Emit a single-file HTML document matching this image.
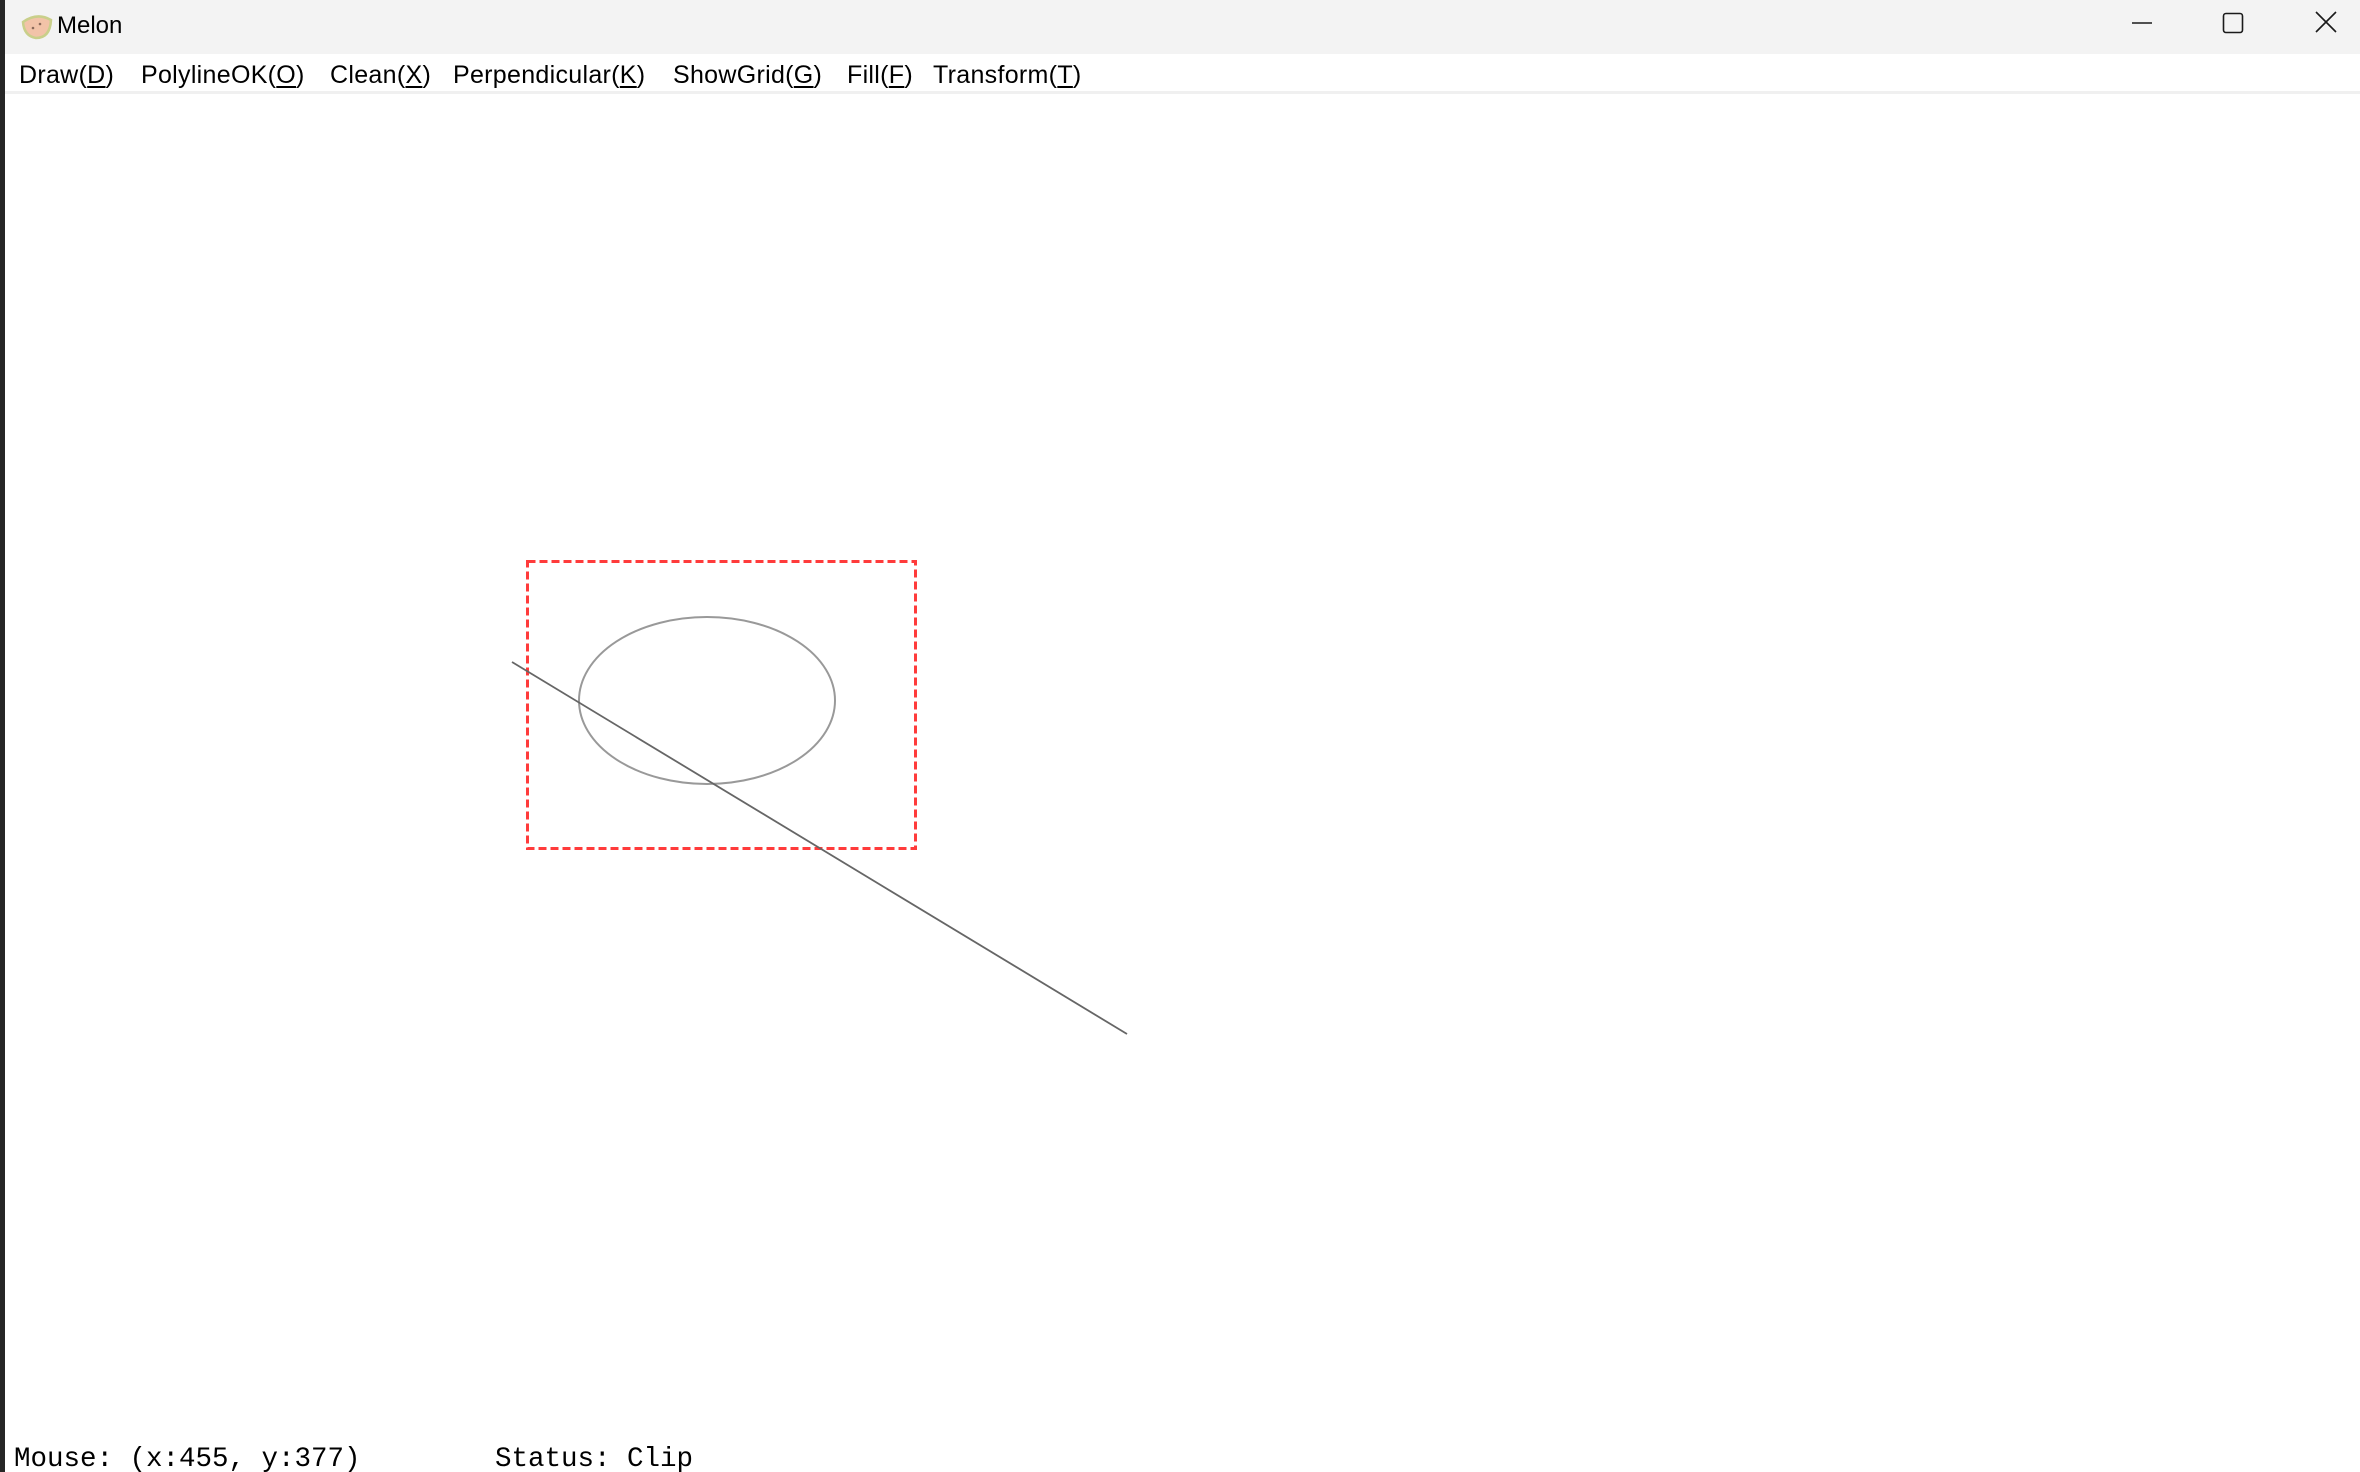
<!DOCTYPE html>
<html><head><meta charset="utf-8"><style>
html,body{margin:0;padding:0;width:2360px;height:1472px;overflow:hidden;background:#fff;position:relative;font-family:"Liberation Sans","Noto Sans CJK SC",sans-serif}
.lb{position:absolute;left:0;top:0;width:5px;height:1472px;background:#262626}
.tb{position:absolute;left:5px;top:0;right:0;height:54px;background:#f3f3f3}
.title{position:absolute;left:57px;top:12px;font-size:24px;color:#000}
.mb{position:absolute;left:5px;top:54px;right:0;height:37px;background:#fff}
.ml{position:absolute;left:5px;top:91px;right:0;height:3px;background:#f0f0f0}
.mi{position:absolute;top:61px;font-size:25px;color:#000;white-space:nowrap;letter-spacing:0.3px}
.mi u{text-underline-offset:3px}
.st{position:absolute;top:1444px;font-family:"Liberation Mono",monospace;font-size:27.5px;color:#000;white-space:pre}
</style></head><body>
<div class="lb"></div>
<div class="tb"></div>
<svg style="position:absolute;left:20px;top:8px" width="34" height="33" viewBox="0 0 34 33">
<path d="M3 14 Q17 4 31 12 Q30 30 16 30 Q4 28 3 14Z" fill="#f2c3a8" stroke="#c9cf8a" stroke-width="2.5"/>
<circle cx="13" cy="20" r="1.3" fill="#8a6a5a"/><circle cx="20" cy="16" r="1.3" fill="#8a6a5a"/>
</svg>
<div class="title">Melon</div>
<svg style="position:absolute;left:2120px;top:8px" width="240" height="40">
<line x1="12" y1="15" x2="32" y2="15" stroke="#1a1a1a" stroke-width="1.6"/>
<rect x="103.5" y="5.5" width="19" height="19" rx="2.5" fill="none" stroke="#1a1a1a" stroke-width="1.6"/>
<path d="M196 4 L216 24 M216 4 L196 24" stroke="#1a1a1a" stroke-width="1.6"/>
</svg>
<div class="mb"></div>
<div class="ml"></div>
<div class="mi" style="left:19px">Draw(<u>D</u>)</div>
<div class="mi" style="left:141px">PolylineOK(<u>O</u>)</div>
<div class="mi" style="left:330px">Clean(<u>X</u>)</div>
<div class="mi" style="left:453px">Perpendicular(<u>K</u>)</div>
<div class="mi" style="left:673px">ShowGrid(<u>G</u>)</div>
<div class="mi" style="left:847px">Fill(<u>F</u>)</div>
<div class="mi" style="left:933px">Transform(<u>T</u>)</div>
<svg style="position:absolute;left:0;top:0" width="2360" height="1472">
<rect x="527.5" y="561.5" width="388" height="287" fill="none" stroke="#ff3b3b" stroke-width="3" stroke-dasharray="8 4"/>
<ellipse cx="707" cy="700.5" rx="128" ry="83.5" fill="none" stroke="#999" stroke-width="2"/>
<line x1="512" y1="662" x2="1127" y2="1034" stroke="#666" stroke-width="1.8"/>
</svg>
<div class="st" style="left:14px">Mouse: (x:455, y:377)</div>
<div class="st" style="left:495px">Status: Clip</div>
</body></html>
